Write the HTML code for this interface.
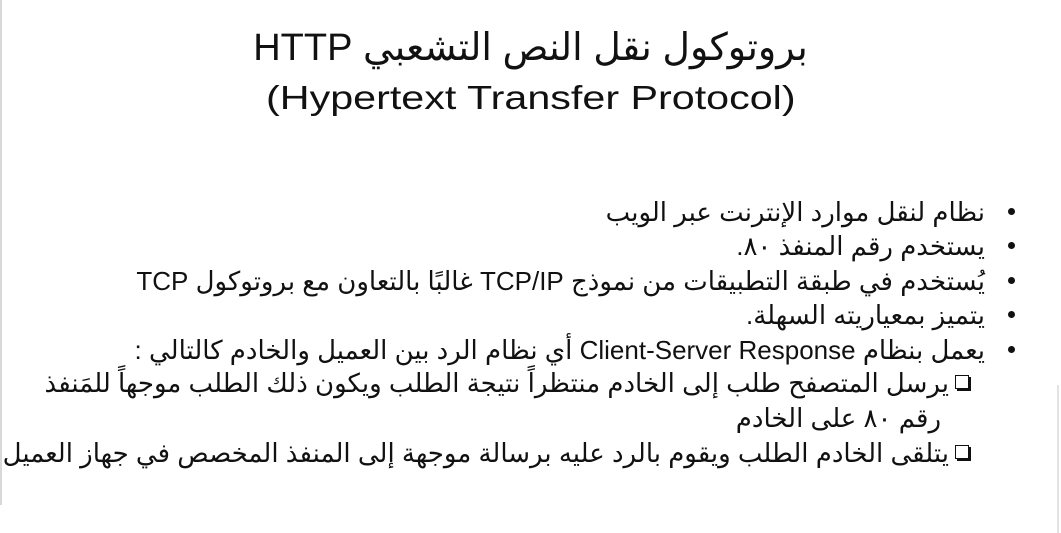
<!DOCTYPE html>
<html><head><meta charset="utf-8">
<style>
html,body{margin:0;padding:0;background:#fff;}
body{width:1061px;height:533px;position:relative;overflow:hidden;font-family:"Liberation Sans","DejaVu Sans",sans-serif;color:#111;}
.lborder{position:absolute;left:0;top:0;width:2px;height:505px;background:#d8d8d8;}
.rborder{position:absolute;left:1057px;top:385px;width:2px;height:148px;background:#e2e2e2;}
.t{position:absolute;left:0;width:1061px;text-align:center;line-height:44px;}
.l{position:absolute;right:76px;direction:rtl;white-space:nowrap;font-size:26px;line-height:30px;}
.b{position:absolute;left:1008px;width:7px;height:7px;border-radius:50%;background:#111;}
.c{position:absolute;left:955px;width:12px;height:12px;border:1.5px solid #111;box-shadow:2px 2px 0 #111;}
.s{position:absolute;right:112px;direction:rtl;white-space:nowrap;font-size:26px;line-height:30px;}
</style></head><body>
<div class="lborder"></div><div class="rborder"></div>
<div class="t" style="top:26px;font-size:38px;direction:rtl;">بروتوكول نقل النص التشعبي HTTP</div>
<div class="t" style="top:76px;font-size:33px;"><span style="display:inline-block;transform:scaleX(1.25);">(Hypertext Transfer Protocol)</span></div>

<div class="b" style="top:208px"></div>
<div class="l" style="top:197px">نظام لنقل موارد الإنترنت عبر الويب</div>
<div class="b" style="top:242px"></div>
<div class="l" style="top:231px">يستخدم رقم المنفذ ٨٠.</div>
<div class="b" style="top:277px"></div>
<div class="l" style="top:266px">يُستخدم في طبقة التطبيقات من نموذج TCP/IP غالبًا بالتعاون مع بروتوكول TCP</div>
<div class="b" style="top:311px"></div>
<div class="l" style="top:300px">يتميز بمعياريته السهلة.</div>
<div class="b" style="top:346px"></div>
<div class="l" style="top:335px">يعمل بنظام Client-Server Response أي نظام الرد بين العميل والخادم كالتالي :</div>
<div class="c" style="top:375px"></div>
<div class="s" style="top:368px">يرسل المتصفح طلب إلى الخادم منتظراً نتيجة الطلب ويكون ذلك الطلب موجهاً للمَنفذ</div>
<div class="s" style="top:403px;right:120px">رقم ٨٠ على الخادم</div>
<div class="c" style="top:445px"></div>
<div class="s" style="top:438px">يتلقى الخادم الطلب ويقوم بالرد عليه برسالة موجهة إلى المنفذ المخصص في جهاز العميل</div>
</body></html>
